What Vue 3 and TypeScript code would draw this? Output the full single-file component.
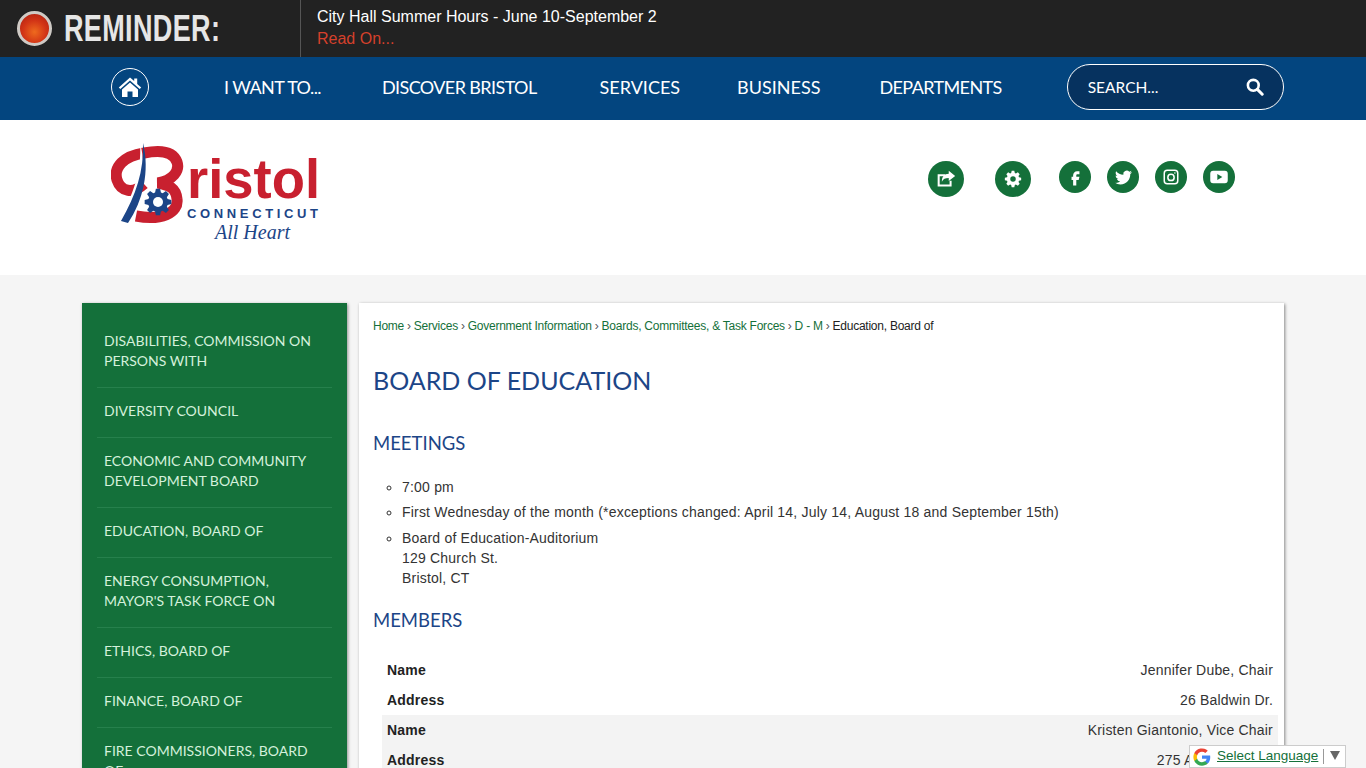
<script setup lang="ts">
interface Member {
  name: string
  address: string
}

const navLinks = ['I WANT TO...', 'DISCOVER BRISTOL', 'SERVICES', 'BUSINESS', 'DEPARTMENTS']

const sideLinks = [
  'DISABILITIES, COMMISSION ON PERSONS WITH',
  'DIVERSITY COUNCIL',
  'ECONOMIC AND COMMUNITY DEVELOPMENT BOARD',
  'EDUCATION, BOARD OF',
  'ENERGY CONSUMPTION, MAYOR\'S TASK FORCE ON',
  'ETHICS, BOARD OF',
  'FINANCE, BOARD OF',
  'FIRE COMMISSIONERS, BOARD OF',
]

const crumbs = [
  'Home',
  'Services',
  'Government Information',
  'Boards, Committees, & Task Forces',
  'D - M',
]

const members: Member[] = [
  { name: 'Jennifer Dube, Chair', address: '26 Baldwin Dr.' },
  { name: 'Kristen Giantonio, Vice Chair', address: '275 Allentown Rd.' },
]

// cog outline centred on 0,0
const gearPath = (teeth: number, outer: number, inner: number): string => {
  const pts: string[] = []
  const step = (Math.PI * 2) / teeth
  for (let i = 0; i < teeth; i++) {
    const a = i * step
    const corners: [number, number][] = [
      [inner, a - step * 0.38],
      [outer, a - step * 0.2],
      [outer, a + step * 0.2],
      [inner, a + step * 0.38],
    ]
    for (const [r, t] of corners) {
      pts.push(`${(r * Math.cos(t)).toFixed(2)} ${(r * Math.sin(t)).toFixed(2)}`)
    }
  }
  return `M${pts.join('L')}Z`
}
</script>

<template>
  <div class="page">
    <div class="reminder">
      <div class="reminder-label">
        <span class="lamp"></span>
        <span class="reminder-word">REMINDER:</span>
      </div>
      <div class="reminder-text">
        <div>City Hall Summer Hours - June 10-September 2</div>
        <div class="read-on">Read On...</div>
      </div>
    </div>

    <nav class="nav">
      <a class="home">
        <svg viewBox="0 0 24 24" width="24" height="24">
          <path fill="#fff" d="M12 2.500 0.800 12.400l1.500 1.700L12 5.600l9.700 8.500 1.500-1.700-4-3.500V3.500h-3v2.600z" />
          <path fill="#fff" d="M12 7.600 4 14.600V22h5.500v-5.500h5V22H20v-7.400z" />
        </svg>
      </a>
      <a v-for="link in navLinks" :key="link" class="nav-link">{{ link }}</a>
      <div class="search">
        <span>SEARCH...</span>
        <svg viewBox="0 0 18 18" width="18" height="18">
          <circle cx="7.300" cy="7.300" r="5.400" fill="none" stroke="#fff" stroke-width="2.600" />
          <path d="M11.400 11.400 16.200 16.200" stroke="#fff" stroke-width="3" stroke-linecap="round" />
        </svg>
      </div>
    </nav>

    <header class="masthead">
      <svg class="logo" viewBox="0 0 225 105" width="225" height="105">
        <path
          fill="none"
          stroke="#c8202f"
          stroke-width="11"
          d="M25 75C50 80 68 72 66 58 65 47 58 44 47 42 62 39 69 30 66 21 62 10 48 9 33 12 13 15 2 26 6 39 10 51 22 53 33 43"
        />
        <path fill="#fff" d="M29 2C37 30 29 60 14 84L8 80C22 54 31 30 29 2Z" />
        <path fill="#1c4587" d="M32 2C39 30 32 60 17 82L10 80C25 54 33 30 32 2Z" />
        <path fill="#1c4587" :d="gearPath(8, 13.500, 10)" transform="translate(47 61)" />
        <circle cx="47" cy="61" r="5" fill="#fff" />
        <text x="76" y="57" class="logo-name" textLength="133" lengthAdjust="spacingAndGlyphs">ristol</text>
        <text x="76" y="77" class="logo-state" textLength="131">CONNECTICUT</text>
        <text x="104" y="98" class="logo-tag">All Heart</text>
      </svg>

      <div class="tools">
        <a class="tool">
          <svg viewBox="0 0 24 24" width="22" height="22">
            <path fill="none" stroke="#fff" stroke-width="2.200" d="M17 14v5H4V8h7" />
            <path fill="#fff" d="M15 3l7 5.600-7 5.600v-3.300c-4 0-6 1-7.500 4C7.500 9.500 10 6.500 15 6.300z" />
          </svg>
        </a>
        <a class="tool">
          <svg viewBox="-12 -12 24 24" width="22" height="22">
            <path fill="#fff" :d="gearPath(8, 9, 6.800)" />
            <circle r="3" fill="#14703a" />
          </svg>
        </a>
      </div>

      <div class="social">
        <a class="social-btn">
          <svg viewBox="0 0 24 24" width="19" height="19">
            <path fill="#fff" d="M14 8h3V4h-3c-2.800 0-5 2.200-5 5v2H7v4h2v7h4v-7h3l1-4h-4V9c0-.6.4-1 1-1z" />
          </svg>
        </a>
        <a class="social-btn">
          <svg viewBox="0 0 24 24" width="17" height="17">
            <path
              fill="#fff"
              d="M23.953 4.570a10 10 0 01-2.825.775 4.958 4.958 0 002.163-2.723c-.951.555-2.005.959-3.127 1.184a4.920 4.920 0 00-8.384 4.482C7.690 8.095 4.067 6.130 1.640 3.162a4.822 4.822 0 00-.666 2.475c0 1.710.870 3.213 2.188 4.096a4.904 4.904 0 01-2.228-.616v.060a4.923 4.923 0 003.946 4.827 4.996 4.996 0 01-2.212.085 4.936 4.936 0 004.604 3.417 9.867 9.867 0 01-6.102 2.105c-.390 0-.779-.023-1.170-.067a13.995 13.995 0 007.557 2.209c9.053 0 13.998-7.496 13.998-13.985 0-.210 0-.420-.015-.630A9.935 9.935 0 0024 4.590z"
            />
          </svg>
        </a>
        <a class="social-btn">
          <svg viewBox="0 0 24 24" width="18" height="18" fill="none" stroke="#fff" stroke-width="2">
            <rect x="3" y="3" width="18" height="18" rx="4" />
            <circle cx="12" cy="12.500" r="4.200" />
            <circle cx="17.200" cy="6.800" r="1" fill="#fff" stroke="none" />
          </svg>
        </a>
        <a class="social-btn">
          <svg viewBox="0 0 24 24" width="20" height="20">
            <path
              fill="#fff"
              fill-rule="evenodd"
              d="M5 4.500h14a3.500 3.500 0 013.500 3.500v8a3.500 3.500 0 01-3.500 3.500H5A3.500 3.500 0 011.500 16V8A3.500 3.500 0 015 4.500zM10 8.500v7l6-3.500z"
            />
          </svg>
        </a>
      </div>
    </header>

    <div class="body">
      <aside class="side">
        <a v-for="link in sideLinks" :key="link" class="side-link">{{ link }}</a>
      </aside>

      <main class="main">
        <div class="crumbs">
          <template v-for="crumb in crumbs" :key="crumb">
            <a>{{ crumb }}</a><span class="sep">›</span>
          </template>
          <span>Education, Board of</span>
        </div>

        <h1>BOARD OF EDUCATION</h1>

        <h2 class="meetings">MEETINGS</h2>
        <ul>
          <li>7:00 pm</li>
          <li>First Wednesday of the month (*exceptions changed: April 14, July 14, August 18 and September 15th)</li>
          <li>Board of Education-Auditorium<br />129 Church St.<br />Bristol, CT</li>
        </ul>

        <h2 class="members">MEMBERS</h2>
        <table>
          <tbody v-for="member in members" :key="member.name">
            <tr>
              <th>Name</th>
              <td>{{ member.name }}</td>
            </tr>
            <tr>
              <th>Address</th>
              <td>{{ member.address }}</td>
            </tr>
          </tbody>
        </table>
      </main>
    </div>

    <div class="translate">
      <svg viewBox="0 0 24 24" width="18" height="18">
        <path fill="#4285f4" d="M23 12.300c0-.8-.1-1.600-.2-2.300H12v4.400h6.200a5.300 5.300 0 01-2.300 3.500v2.900h3.700c2.100-2 3.400-4.900 3.400-8.500z" />
        <path fill="#34a853" d="M12 23.500c3.100 0 5.700-1 7.600-2.800l-3.700-2.900c-1 .7-2.300 1.100-3.900 1.100-3 0-5.500-2-6.400-4.700H1.800v3A11.500 11.500 0 0012 23.500z" />
        <path fill="#fbbc05" d="M5.600 14.200a6.900 6.900 0 010-4.400v-3H1.800a11.500 11.500 0 000 10.400z" />
        <path fill="#ea4335" d="M12 5.100c1.700 0 3.200.6 4.400 1.700l3.300-3.300A11.500 11.500 0 001.800 6.800l3.800 3C6.500 7.100 9 5.100 12 5.100z" />
      </svg>
      <a class="translate-link">Select Language</a>
      <span class="translate-sep"></span>
      <span class="translate-arrow"></span>
    </div>
  </div>
</template>

<style>
html,
body {
  overflow: hidden;
}
</style>

<style scoped>
.page {
  position: relative;
  height: 768px;
  overflow: hidden;
  background: #f5f5f5;
  font-family: "Liberation Sans", Arial, sans-serif;
}

.reminder {
  display: flex;
  height: 57px;
  background: #222;
}

.reminder-label {
  display: flex;
  align-items: center;
  width: 301px;
  padding-left: 17px;
  box-sizing: border-box;
  border-right: 1px solid #555;
}

.lamp {
  flex-shrink: 0;
  width: 35px;
  height: 35px;
  box-sizing: border-box;
  border: 3px solid #cfcac5;
  border-radius: 50%;
  background: radial-gradient(circle at 50% 62%, #ee6a1e 0%, #d23416 50%, #a81c10 100%);
}

.reminder-word {
  margin-left: 12px;
  color: #e6e6e6;
  font-size: 37px;
  font-weight: 700;
  letter-spacing: 0.5px;
  transform: scaleX(0.73);
  transform-origin: left center;
}

.reminder-text {
  padding: 6px 0 0 16px;
  color: #fff;
  font-size: 16px;
  line-height: 22px;
}

.read-on {
  color: #d5402b;
}

.nav {
  display: flex;
  align-items: center;
  height: 63px;
  padding: 0 0 4px 111px;
  box-sizing: border-box;
  background: #03457f;
  font-family: Lato, sans-serif;
}

.home {
  display: flex;
  align-items: center;
  justify-content: center;
  width: 38px;
  height: 38px;
  box-sizing: border-box;
  border: 1px solid #fff;
  border-radius: 50%;
}

.nav-link {
  color: #fff;
  font-size: 18px;
  letter-spacing: -0.6px;
  white-space: nowrap;
}

.nav-link:nth-of-type(2) { margin-left: 75px; }
.nav-link:nth-of-type(3) { margin-left: 61px; }
.nav-link:nth-of-type(4) { margin-left: 63px; letter-spacing: 0; }
.nav-link:nth-of-type(5) { margin-left: 57px; letter-spacing: 0; }
.nav-link:nth-of-type(6) { margin-left: 59px; }

.search {
  display: flex;
  flex-shrink: 0;
  align-items: center;
  justify-content: space-between;
  width: 217px;
  height: 46px;
  margin-left: 65px;
  padding: 0 19px 0 20px;
  box-sizing: border-box;
  border: 1px solid #fff;
  border-radius: 23px;
  background: #06325f;
  color: #fff;
  font-size: 15.500px;
}

.masthead {
  display: flex;
  align-items: flex-start;
  height: 155px;
  padding-left: 111px;
  background: #fff;
}

.logo {
  margin-top: 21px;
  flex-shrink: 0;
}

.logo-name {
  fill: #c8202f;
  font-family: "Liberation Sans", sans-serif;
  font-size: 56px;
  font-weight: 700;
}

.logo-state {
  fill: #1c4587;
  font-family: "Liberation Sans", sans-serif;
  font-size: 13px;
  font-weight: 700;
}

.logo-tag {
  fill: #1c4587;
  font-family: "Liberation Serif", serif;
  font-size: 20px;
  font-style: italic;
}

.tools {
  display: flex;
  gap: 31px;
  margin: 41px 0 0 592px;
}

.tool {
  display: flex;
  align-items: center;
  justify-content: center;
  width: 36px;
  height: 36px;
  border-radius: 50%;
  background: #14703a;
}

.social {
  display: flex;
  gap: 16px;
  margin: 41px 0 0 28px;
}

.social-btn {
  display: flex;
  align-items: center;
  justify-content: center;
  width: 32px;
  height: 32px;
  border-radius: 50%;
  background: #14703a;
}

.body {
  display: flex;
  align-items: flex-start;
  gap: 12px;
  padding: 28px 0 0 82px;
}

.side {
  display: flex;
  flex-direction: column;
  flex-shrink: 0;
  width: 265px;
  padding: 15px 15px 0;
  box-sizing: border-box;
  background: #14703a;
  box-shadow: 1px 1px 3px rgba(0, 0, 0, 0.4);
}

.side-link {
  padding: 13px 7px 16px;
  border-bottom: 1px solid #26804c;
  color: #d4f1dc;
  font-family: Lato, sans-serif;
  font-size: 14px;
  line-height: 20px;
}

.main {
  flex-shrink: 0;
  width: 925px;
  height: 600px;
  padding: 16px 6px 0 14px;
  box-sizing: border-box;
  background: #fff;
  box-shadow: 1px 1px 3px rgba(0, 0, 0, 0.45);
  color: #333;
}

.crumbs {
  color: #222;
  font-size: 12px;
  line-height: 14px;
  letter-spacing: -0.24px;
}

.crumbs a {
  color: #14703a;
}

.sep {
  margin: 0 3px;
  color: #555;
}

h1,
h2 {
  margin: 0;
  color: #1c4587;
  font-family: Lato, sans-serif;
  font-weight: 400;
}

h1 {
  margin-top: 32px;
  font-size: 25px;
  line-height: 30px;
}

h2 {
  font-size: 18.500px;
  line-height: 24px;
}

.meetings {
  margin-top: 36px;
}

.members {
  margin-top: 20px;
}

ul {
  margin: 22px 0 0;
  padding: 0 0 0 29px;
  list-style: circle;
  font-size: 14px;
  line-height: 20px;
  letter-spacing: 0.2px;
}

li + li {
  margin-top: 5px;
}

li:last-child {
  margin-top: 6px;
}

table {
  width: 896px;
  margin: 23px 0 0 9px;
  border-collapse: collapse;
  font-size: 14px;
  letter-spacing: 0.2px;
}

tbody:nth-of-type(2) {
  background: #f3f3f3;
}

th,
td {
  height: 30px;
  padding: 0 5px;
}

th {
  width: 200px;
  color: #222;
  text-align: left;
}

td {
  text-align: right;
}

.translate {
  position: absolute;
  left: 1189px;
  top: 745px;
  display: flex;
  align-items: center;
  width: 157px;
  height: 23px;
  padding-left: 3px;
  box-sizing: border-box;
  border: 1px solid #ccc;
  background: #fff;
  font-size: 13.500px;
}

.translate-link {
  margin: 0 0 3px 6px;
  color: #14703a;
  text-decoration: underline;
}

.translate-sep {
  width: 1px;
  height: 15px;
  margin-left: 5px;
  background: #999;
}

.translate-arrow {
  width: 0;
  height: 0;
  margin: 0 0 2px 6px;
  border-top: 9px solid #666;
  border-left: 5.500px solid transparent;
  border-right: 5.500px solid transparent;
}
</style>
